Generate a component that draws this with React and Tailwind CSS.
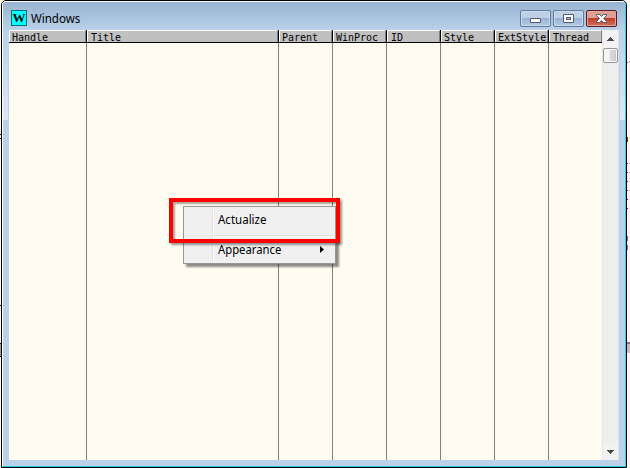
const columns = [
  { name: 'Handle', width: 'w-[78px]', pad: 'pl-[3px]' },
  { name: 'Title', width: 'w-[192px]', pad: 'pl-[4px]' },
  { name: 'Parent', width: 'w-[54px]', pad: 'pl-[3px]' },
  { name: 'WinProc', width: 'w-[54px]', pad: 'pl-[3px]' },
  { name: 'ID', width: 'w-[54px]', pad: 'pl-[4px]' },
  { name: 'Style', width: 'w-[54px]', pad: 'pl-[3px]' },
  { name: 'ExtStyle', width: 'w-[54px]', pad: 'pl-[3px]' },
  { name: 'Thread', width: 'w-[53px]', pad: 'pl-[4px]', last: true },
];

function Column({ name, width, pad, last }) {
  return (
    <div className={`flex shrink-0 flex-col ${width}`}>
      <div className={`flex h-[13px] shrink-0 border-b border-black ${last ? '' : 'border-r'}`}>
        <div className={`h-3 w-full border-t border-l border-r border-t-white border-l-white border-r-[#808080] bg-[#c0c0c0] ${pad} -indent-px font-['DejaVu_Sans_Mono',monospace] text-[10px] leading-[13px] whitespace-nowrap text-black`}>
          {name}
        </div>
      </div>
      <div className={`flex-1 bg-[#fffbf0] ${last ? '' : 'border-r border-[#808080]'}`} />
    </div>
  );
}

function CaptionButton({ kind }) {
  const close = kind === 'close';
  return (
    <div
      className={
        close
          ? 'flex h-[17px] w-[31px] items-center justify-center rounded-[2px] border border-[#5a1a25] bg-linear-to-b from-[#dda093] from-45% via-[#bd3d2a] via-50% to-[#d0705c] shadow-[inset_0_0_0_1px_#e4a79c]'
          : 'flex h-[17px] w-[31px] items-center justify-center rounded-[2px] border border-[#5f7a9c] bg-linear-to-b from-[#bdd0e6] from-45% via-[#98b4d3] via-50% to-[#b2cce6] shadow-[inset_0_0_0_1px_#cbdcef]'
      }
    >
      <svg width="13" height="11" viewBox="0 0 13 11">
        {kind === 'min' && <rect x="1.5" y="5.5" width="10" height="4" rx=".5" fill="#fff" stroke="#535666" />}
        {kind === 'max' && (
          <g stroke="#535666">
            <rect x="1.5" y="1.5" width="10" height="8" rx=".5" fill="#fff" />
            <rect x="4.5" y="4.5" width="4" height="2" fill="#a8bfda" />
          </g>
        )}
        {close && (
          <path
            d="M1.5 1.5h3.2l1.8 2 1.8-2h3.2v1L8.7 5.5l2.8 3v1H8.3l-1.8-2-1.8 2H1.5v-1l2.8-3-2.8-3z"
            fill="#fff"
            stroke="#535666"
          />
        )}
      </svg>
    </div>
  );
}

function Scrollbar() {
  return (
    <div className="flex w-[17px] shrink-0 flex-col items-center border-r border-l border-r-[#e3e3e3] border-l-[#e9e7e3] bg-[#eeeeee]">
      <div className="flex h-[18px] w-full items-center justify-center bg-[#f2f2f2]">
        <svg width="7" height="4" viewBox="0 0 7 4">
          <path d="M3 0h1v1h1v1h1v1h1v1H0V3h1V2h1V1h1z" fill="#4b4b4b" />
        </svg>
      </div>
      <div className="h-[15px] w-[15px] shrink-0 rounded-[2px] border border-[#969696] bg-linear-to-r from-[#f6f6f6] from-35% via-[#dcdcdc] via-50% to-[#c8c8c8] shadow-[inset_0_0_0_1px_#f7f7f7]" />
      <div className="flex-1" />
      <div className="flex h-[17px] w-full items-center justify-center bg-[#f2f2f2]">
        <svg width="7" height="4" viewBox="0 0 7 4">
          <path d="M0 0h7v1H6v1H5v1H4v1H3V3H2V2H1V1H0z" fill="#4b4b4b" />
        </svg>
      </div>
    </div>
  );
}

/* Slivers of the window that lies behind this one. */
function BackgroundEdges() {
  return (
    <svg className="absolute inset-0" width="630" height="468" shapeRendering="crispEdges">
      <path d="M0 134h1M0 138h1M0 305h2M0 343h1M0 356h1" stroke="#000" transform="translate(0 .5)" />
      <rect x="0" y="344" width="1" height="12" fill="#a0a0a0" />
      <path d="M627 62.5h1M629 61.5h1" stroke="#777" />
      <path d="M627.5 137v5M627.5 163v1M627.5 172v1M627.5 181v1M627.5 190v1M627.5 199v1M627.5 208v1" stroke="#e00000" />
      <path d="M627.5 236v5M627.5 245v5" stroke="#777" />
      <rect x="627" y="342" width="3" height="2" fill="#808080" />
      <rect x="627" y="344" width="3" height="9" fill="#c0c0c0" />
    </svg>
  );
}

function ContextMenu() {
  return (
    <div className="absolute top-[206px] left-[183px] flex h-[58px] w-[153px] border border-[#979797] bg-[#f0f0f0] p-[2px] font-['Noto_Sans','Open_Sans',sans-serif] text-[12px] text-black shadow-[3px_3px_2px_rgba(0,0,0,0.45)]">
      <div className="w-[27px] shrink-0 border-r border-[#e0e0e0]" />
      <div className="flex flex-1 flex-col border-l border-white">
        <div className="h-[26px] pl-[4px] leading-[22px]">
          <span className="inline-block origin-left scale-x-[0.96]">Actualize</span>
        </div>
        <div className="h-[2px] shrink-0 border-t border-b border-t-[#e0e0e0] border-b-white" />
        <div className="flex h-[24px] items-center justify-between pr-[9px] pl-[4px] leading-[24px]">
          <span className="inline-block origin-left scale-x-[0.94] pt-[2px]">Appearance</span>
          <svg width="4" height="7" viewBox="0 0 4 7">
            <path d="M0 0l4 3.5L0 7z" />
          </svg>
        </div>
      </div>
    </div>
  );
}

export default function App() {
  return (
    <div className="relative h-[468px] w-[630px] overflow-hidden bg-[#fffbf0] pl-px">
      <BackgroundEdges />
      <div className="relative flex h-[468px] w-[626px] flex-col overflow-hidden rounded-t-[5px] border border-black bg-[#b9d1ea]">
        <div className="flex flex-1 flex-col overflow-hidden rounded-t-[4px] border-t border-r border-b border-l border-t-white border-r-[#35cdee] border-b-[#22c8df] border-l-white">
          <div className="flex h-[28px] shrink-0 items-start justify-between bg-linear-to-b from-[#99b4d1] to-[#b9d1ea] pr-[8px] pl-[8px]">
            <div className="flex items-start pt-[8px]">
              <div className="flex h-4 w-4 justify-center border border-[#087070] bg-[#00ffff] font-['Liberation_Serif',serif] text-[13px] leading-[13px] font-bold text-black">
                <span>W</span>
              </div>
              <span className="ml-[4px] origin-left scale-x-[0.96] pt-px font-['Noto_Sans','Open_Sans',sans-serif] text-[12px] leading-4 text-black">
                Windows
              </span>
            </div>
            <div className="flex gap-[2px] pt-[8px]">
              <CaptionButton kind="min" />
              <CaptionButton kind="max" />
              <CaptionButton kind="close" />
            </div>
          </div>
          <div className="flex h-[430px] shrink-0">
            <div className="flex w-[6px] shrink-0 flex-col">
              <div className="h-[90px] w-[5px] bg-linear-to-b from-[#b9d1ea] to-[#dde8f4]" />
            </div>
            <div className="flex w-[593px] shrink-0">
              {columns.map((column) => (
                <Column key={column.name} {...column} />
              ))}
            </div>
            <Scrollbar />
            <div className="flex flex-1 flex-col items-end bg-[#b9d1ea]">
              <div className="h-[90px] w-[5px] bg-linear-to-b from-[#b9d1ea] to-[#dde8f4]" />
            </div>
          </div>
        </div>
      </div>
      <ContextMenu />
      <div className="absolute top-[198px] left-[169px] h-[45px] w-[171px] border-4 border-[#ff0000] shadow-[2px_2px_2px_rgba(0,0,0,0.4),inset_2px_2px_2px_rgba(0,0,0,0.35)]" />
    </div>
  );
}
